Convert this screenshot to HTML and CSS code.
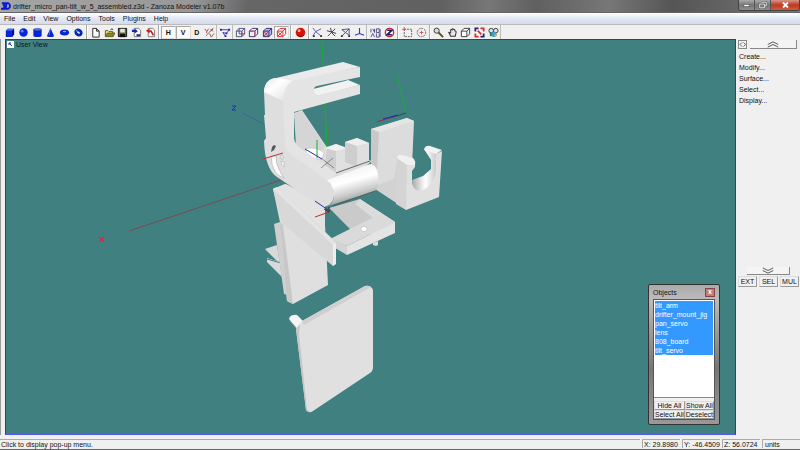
FILE: index.html
```html
<!DOCTYPE html>
<html lang="en">
<head>
    <meta charset="UTF-8">
    <meta name="viewport" content="width=device-width, initial-scale=1.0">
    <title>Zanoza Modeler</title>
    <link rel="stylesheet" href="styles.css">
</head>
<body>
    <!-- Title bar -->
    <header class="titlebar">
        <svg class="app-icon" viewBox="0 0 11 10"><path d="M1 2h3l-1 2.500 1 .5-1 3H0M6 2h2q2 1 2 3t-2 3H5z" fill="none" stroke="#0816d8" stroke-width="2"/></svg>
        <h1>drifter_micro_pan-tilt_w_5_assembled.z3d - Zanoza Modeler v1.07b</h1>
        <div class="window-buttons">
            <button type="button" aria-label="Minimize"><svg viewBox="0 0 16 10"><path d="M5 5.500h6" stroke="#555" stroke-width="3"/><path d="M5.500 5.500h5" stroke="#fff" stroke-width="1.500"/></svg></button>
            <button type="button" aria-label="Restore"><svg viewBox="0 0 16 10"><path d="M7 2h5v4h-2M5 4h5v4H5z" fill="none" stroke="#555" stroke-width="2"/><path d="M7 2h5v4h-2M5 4h5v4H5z" fill="none" stroke="#eee"/></svg></button>
            <button type="button" class="close" aria-label="Close"><svg viewBox="0 0 28 10"><path d="M12 2.500l5 5m0-5l-5 5" stroke="#fff" stroke-width="1.800"/></svg></button>
        </div>
    </header>

    <!-- Menu -->
    <nav class="menubar">
        <button type="button">File</button>
        <button type="button">Edit</button>
        <button type="button">View</button>
        <button type="button">Options</button>
        <button type="button">Tools</button>
        <button type="button">Plugins</button>
        <button type="button">Help</button>
    </nav>

    <!-- Toolbar -->
    <div class="toolbar">
        <div class="group six">
            <button type="button" aria-label="Box"><svg viewBox="0 0 12 12"><path d="M2 4l2-2h7v6l-2 3H2z" fill="#0626d6"/><path d="M2 4l2-2h7L9 4z" fill="#3d6cff"/><path d="M9 4l2-2v6l-2 3z" fill="#03107c"/></svg></button>
            <button type="button" aria-label="Sphere"><svg viewBox="0 0 12 12"><circle cx="6" cy="6" r="4.600" fill="#0626d6"/><circle cx="4.500" cy="4.500" r="1.500" fill="#5b8bff"/></svg></button>
            <button type="button" aria-label="Cylinder"><svg viewBox="0 0 12 12"><path d="M1.500 3v7q4.500 2 9 0V3z" fill="#0626d6"/><ellipse cx="6" cy="3" rx="4.500" ry="1.300" fill="#4d7cf5" stroke="#03107c" stroke-width=".5"/></svg></button>
            <button type="button" aria-label="Cone"><svg viewBox="0 0 12 12"><path d="M6 1L2 10q4 2 8 0z" fill="#0626d6"/><path d="M6 2L4.500 9" stroke="#4d7cf5"/></svg></button>
            <button type="button" aria-label="Disc"><svg viewBox="0 0 12 12"><ellipse cx="6" cy="6" rx="5" ry="3.200" fill="#0626d6"/><ellipse cx="6" cy="5" rx="2" ry=".8" fill="#8bb0ff"/></svg></button>
            <button type="button" aria-label="Torus"><svg viewBox="0 0 12 12"><ellipse cx="6" cy="6" rx="3.200" ry="2.600" transform="rotate(35 6 6)" fill="none" stroke="#0626b6" stroke-width="3"/><circle cx="4" cy="4" r="1" fill="#5b8bff"/></svg></button>
        </div>
        <div class="group five rule">
            <button type="button" aria-label="New"><svg viewBox="0 0 12 12"><path d="M3 1.500h4l3 3v6.500H3zM7 1.500v3h3" fill="#fff" stroke="#222"/></svg></button>
            <button type="button" aria-label="Open"><svg viewBox="0 0 12 12"><path d="M1.500 10V4h3l1 1h4v2" fill="#f5ee8a" stroke="#554f14"/><path d="M1.500 10.500l2-4H12l-2 4z" fill="#8c861d" stroke="#3d3b08" stroke-width=".7"/><path d="M7 3q2-2 3 0" fill="none" stroke="#222"/></svg></button>
            <button type="button" aria-label="Save"><svg viewBox="0 0 12 12"><path d="M1.500 1.500h9v9h-9z" fill="#686c20" stroke="#111"/><path d="M3.500 2h5v4h-5z" fill="#e4e4e4"/><path d="M3 7.500h6V11H3z" fill="#111"/></svg></button>
            <button type="button" aria-label="Import"><svg viewBox="0 0 12 12"><path d="M3.500 1.500h5l2 2v7h-7z" fill="#fff" stroke="#777"/><path d="M1 3h3V1.500l3.500 3-3.500 2.500V5.500H1zM6 8h4v2H6z" fill="#1327bd"/></svg></button>
            <button type="button" aria-label="Export"><svg viewBox="0 0 12 12"><path d="M3.500 1.500h5l2 2v7h-7z" fill="#fff" stroke="#777"/><path d="M1 4l4-2.500v2h2l3 5-1.500 1L6 5.500H5V7z" fill="#cf1d1d"/></svg></button>
        </div>
        <div class="group four rule">
            <button type="button" class="letter pressed">H</button>
            <button type="button" class="letter pressed">V</button>
            <button type="button" class="letter">D</button>
            <button type="button" aria-label="Vertex axes"><svg viewBox="0 0 12 12"><path d="M1 2l2 3 2-3M3 5v2M7 2l3 3m0-3L7 5M6 7l2 4m3-4l-3 4" fill="none" stroke="#c23b3b"/><path d="M2 10l8-9" stroke="#777"/></svg></button>
        </div>
        <div class="group one thin">
            <button type="button" aria-label="Polyline"><svg viewBox="0 0 12 12"><path d="M1 3h9L7 7 3 6l3 4" fill="none" stroke="#3434b5"/><path d="M0 2h2v2H0zM9 2h2v2H9zM6 6h2v2H6zM5 9h2v2H5z" fill="#222b80"/></svg></button>
        </div>
        <div class="group four thin">
            <button type="button" aria-label="Wireframe"><svg viewBox="0 0 12 12"><path d="M1.500 4.500h6v6h-6zM1.500 4.500l3-3h6v6l-3 3M7.500 4.500l3-3M4.500 1.500v6h6" fill="none" stroke="#3b3b75" stroke-width=".9"/><path d="M7.500 5v5" stroke="#d03b3b"/></svg></button>
            <button type="button" aria-label="Edges"><svg viewBox="0 0 12 12"><path d="M1.500 4.500h6v6h-6zM1.500 4.500l3-3h6v6l-3 3M7.500 4.500l3-3" fill="none" stroke="#30307b"/><path d="M7.500 5v5M2 4.500h5" stroke="#d04f5c"/></svg></button>
            <button type="button" aria-label="Faces"><svg viewBox="0 0 12 12"><path d="M1.500 4.500h6v6h-6zM1.500 4.500l3-3h6v6l-3 3M7.500 4.500l3-3" fill="#b9bbea" stroke="#26266e"/><path d="M2 5l5 5m0-5l-5 5" stroke="#d33"/></svg></button>
            <button type="button" class="pressed" aria-label="Object"><svg viewBox="0 0 12 12"><path d="M1.500 4.500h6v6h-6zM1.500 4.500l3-3h6v6l-3 3M7.500 4.500l3-3M2 5l5 5m0-5l-5 5" fill="#fff" stroke="#e02020"/></svg></button>
        </div>
        <div class="group one rule">
            <button type="button" aria-label="Materials"><svg viewBox="0 0 12 12"><circle cx="6" cy="6" r="5.200" fill="#d41408"/><path d="M2 9q4 3 8 0" stroke="#7a0500" fill="none"/><circle cx="4.500" cy="4" r="1.600" fill="#ffb19e"/></svg></button>
        </div>
        <div class="group four rule">
            <button type="button" aria-label="Vertices"><svg viewBox="0 0 12 12"><path d="M1 1l3 4 6-3M4 5l6 5M1 10l3-5" fill="none" stroke="#5151bb"/><path d="M1 9h2v2H1zM9 9h2v2H9z" fill="#333"/></svg></button>
            <button type="button" aria-label="Star"><svg viewBox="0 0 12 12"><path d="M1 4l10 3M5 1l1 5M6 6l4 4M6 6l4-4" stroke="#333" fill="none"/><path d="M6 6l-4 4" stroke="#4444c4"/></svg></button>
            <button type="button" aria-label="Polygons"><svg viewBox="0 0 12 12"><path d="M2 3l8-1v7L6 6l-4 4M2 3l4 3 4-4" fill="none" stroke="#484884"/><path d="M1 9h2v2H1zM9 9h2v2H9z" fill="#333"/></svg></button>
            <button type="button" aria-label="Local axes"><svg viewBox="0 0 12 12"><path d="M6 1v6l-5 2M6 7l5 2" fill="none" stroke="#3838ba" stroke-width="1.200"/></svg></button>
        </div>
        <div class="group two thin">
            <button type="button" aria-label="Numeric"><svg viewBox="0 0 12 12"><path d="M1 2v4m2-4l2 4V2M7 2v4h3V2H7M1 11l2-4 2 4M7 7v4h3V7M11 2v9" fill="none" stroke="#484884"/></svg></button>
            <button type="button" aria-label="Z lock"><svg viewBox="0 0 12 12"><circle cx="6" cy="6" r="4.500" fill="#fff" stroke="#c32626" stroke-width="1.500"/><path d="M3.500 3.500h5l-5 5h5" fill="none" stroke="#1b1b68" stroke-width="1.800"/></svg></button>
        </div>
        <div class="group two rule">
            <button type="button" aria-label="Select rectangle"><svg viewBox="0 0 12 12"><path d="M2.500 2.500h8v8h-8z" fill="none" stroke="#555" stroke-dasharray="2 1"/><path d="M0 2.500h4M2.500 0v4" stroke="#c55"/></svg></button>
            <button type="button" aria-label="Select circle"><svg viewBox="0 0 12 12"><circle cx="6" cy="6" r="4.600" fill="none" stroke="#555" stroke-dasharray="2 1"/><path d="M4 6h4M6 4v4" stroke="#c55"/></svg></button>
        </div>
        <div class="group five rule last">
            <button type="button" aria-label="Zoom"><svg viewBox="0 0 12 12"><circle cx="4" cy="4" r="2.800" fill="#d5dfe2" stroke="#333"/><path d="M6 6l5 5" stroke="#534f0d" stroke-width="2"/></svg></button>
            <button type="button" aria-label="Pan"><svg viewBox="0 0 12 12"><path d="M4 10L2 6l2 .5V3q1-1 1.500 0Q6 1 7 2.500 8.500 2 8.500 4q1.500 0 1.500 1.500L9 10z" fill="#e8e8e8" stroke="#333" stroke-width="1.100"/></svg></button>
            <button type="button" aria-label="Rotate"><svg viewBox="0 0 12 12"><path d="M1.500 4.500h6v6h-6zM1.500 4.500l3-3h6v6l-3 3M7.500 4.500l3-3" fill="#fff" stroke="#333"/></svg></button>
            <button type="button" aria-label="Zoom extents"><svg viewBox="0 0 12 12"><path d="M2 2h8v8H2z" fill="#fff"/><path d="M1.500 5V1.500H5M7 10.500h3.500V7" fill="none" stroke="#22247c" stroke-width="2"/><path d="M7 1.500h3.500V5M5 10.500H1.500V7M4 4l4 4" fill="none" stroke="#d23030" stroke-width="2"/></svg></button>
            <button type="button" aria-label="Render"><svg viewBox="0 0 12 12"><path d="M2 5h6v5H2z" fill="#22854b"/><circle cx="3.500" cy="4" r="2.500" fill="#d9e6ef" stroke="#333"/><circle cx="8.500" cy="4" r="2.500" fill="#d9e6ef" stroke="#333"/><circle cx="6.500" cy="8" r="2.800" fill="#3f9fd5"/><path d="M7 8h3v2H7z" fill="#d9b62a"/></svg></button>
        </div>
    </div>

    <main class="workspace">
        <!-- 3D view -->
        <section class="view">
            <svg class="scene" viewBox="6 40 729 394" aria-label="3D model">
                <defs>
                    <linearGradient id="roll" x1="0" y1="0" x2=".35" y2="1">
                        <stop offset="0" stop-color="#ddd"/><stop offset=".25" stop-color="#f4f4f4"/>
                        <stop offset=".5" stop-color="#fff"/><stop offset=".78" stop-color="#c8c8c8"/><stop offset="1" stop-color="#858585"/>
                    </linearGradient>
                    <linearGradient id="corner" x1="0" y1="0" x2="1" y2="1">
                        <stop offset="0" stop-color="#e2e2e2"/><stop offset=".35" stop-color="#fff"/><stop offset="1" stop-color="#dcdcdc"/>
                    </linearGradient>
                    <linearGradient id="hook" x1="0" y1="0" x2="1" y2="0">
                        <stop offset="0" stop-color="#aaa"/><stop offset=".5" stop-color="#fff"/><stop offset="1" stop-color="#bbb"/>
                    </linearGradient>
                </defs>

                <!-- world axes -->
                <path d="M129 231L284 179" stroke="#8c3c44" stroke-width=".8"/>
                <path d="M242 113L266 125" stroke="#3a609c" stroke-width=".7"/>
                <path d="M322 40L327 150" stroke="#1da83c"/>
                <path d="M99 237l5 5m0-5l-5 5" stroke="#c02b3c"/>
                <path d="M232 106h4l-4 4h4" stroke="#1830cf" fill="none"/>

                <!-- bracket under the arm -->
                <path d="M265 249l12-4 5 32-15-15 0-4 10 3z" fill="#d9d9d9"/>
                <path d="M267 259l14 4" stroke="#408080"/>
                <path d="M274 224l6-2 8 73-4-1z" fill="#cfcfcf"/>
                <path d="M280 222l-7-33 13-5 38 19 4 82-35 19-6-3z" fill="#dfdfdf"/>
                <path d="M280 222l3 3 10 79-6-3z" fill="#c8c8c8"/>
                <path d="M329 208l31-9 35 23-22 12-23-4z" fill="#cacaca"/>
                <path d="M324 209l6 0 20 20-14 6-12-10z" fill="#408080"/>
                <path d="M360 199l35 23-10 5-30-23z" fill="#dcdcdc"/>
                <path d="M330 239l20-10 30-15 15 8-48 24z" fill="#dadada"/>
                <path d="M330 238l17 8v9l-17-10z" fill="#d4d4d4"/>
                <path d="M347 246l48-24v11l-48 22z" fill="#e4e4e4"/>
                <path d="M373 243l5-2v4l-2 1-3-1z" fill="#ddd"/>
                <path d="M273 189l12-5 40 21v30z" fill="#e2e2e2"/>
                <path d="M273 189l4-2 59 55v21l-3 3-51-43z" fill="#d8d8d8"/>
                <path d="M273 189l4-2 59 56-3 2z" fill="#e4e4e4"/>
                <path d="M333 245l3-2v21l-3 2z" fill="#eee"/>
                <ellipse cx="364" cy="229" rx="3.200" ry="2.500" fill="#fff" stroke="#aaa" stroke-width=".5"/>

                <!-- servo plate and hook -->
                <path d="M371 129l36-11 7 3-3 68-14 6-26-11z" fill="#dcdcdc"/>
                <path d="M371 129l36-11 7 3-35 11z" fill="#e5e5e5"/>
                <path d="M371 129l8 3-3 56-5-3z" fill="#c8c8c8"/>
                <path d="M372 187l22-8 3-17 10 1v47z" fill="#d2d2d2"/>
                <path d="M397 158l10 6-1 46-10-6z" fill="#d4d4d4"/>
                <path d="M424 149l7 11v9l-8 7-11 4q0 12 8 13l14-5 5-34-5-5z" fill="url(#hook)"/>
                <path d="M407 163l8-1v5l-3 4v12q2 8 8 8 14-4 16-21v-8q-3-8 6-11l-3 46-33 13z" fill="#e0e0e0"/>
                <path d="M397 158q1-4 5-3l11 3q3 3 2 7l-8 0z" fill="#f0f0f0"/>
                <path d="M424 150q1-5 6-4l12 4-6 4z" fill="#f2f2f2"/>

                <!-- far lug and blocks -->
                <path d="M294 113l8-3 24 36 46 15-10 8-32 14-30-25z" fill="#dedede"/>
                <path d="M294 113l8-2 23 36-12 10-17-10z" fill="#d5d5d5"/>
                <path d="M305 149q12-3 19 4l-2 6q-14 1-17-10z" fill="#fff" stroke="#bbb" stroke-width=".6"/>
                <path d="M327 147l9-3 11 4v20l-11 5-11-7z" fill="#cfcfcf"/>
                <path d="M336 151l11-3v20l-11 5z" fill="#e0e0e0"/>
                <path d="M325 148l11-4 11 4-11 3z" fill="#f1f1f1"/>
                <path d="M345 142l12-4 12 5v19l-12 5-12-5z" fill="#cecece"/>
                <path d="M357 146l12-3v19l-12 5z" fill="#dfdfdf"/>
                <path d="M345 142l12-4 12 5-12 3z" fill="#eee"/>
                <path d="M336 173l34-12" stroke="#666"/>

                <!-- tilt arm -->
                <path d="M345 81l3-1 12 5-45 12-2-8z" fill="#f2f2f2"/>
                <path d="M283 81l77-14v10l-43 9q-4 1-3 5 1 4 4 4l42-10v9l-66 18v26q0 6 9 12l33 23-8 12-45-31q-6-5-7-13l-2-39q0-12 5-21z" fill="#e4e4e4"/>
                <path d="M272 79l71-17 17 5-74 15-22 9q1-9 8-12z" fill="#ebebeb"/>
                <path d="M264 92q1-15 15-14l8 4q-4 8-4 20l2 40q0 10 8 14l35 25q7 6 6 15-2 11-12 11l-45-30q-12-8-13-36l2-3-2-23 1 0z" fill="#dedede"/>
                <path d="M264 92q1-15 15-14l14 3q-9 4-10 20z" fill="url(#corner)"/>
                <path d="M272 147l2-2 2 1-2 4-3 2z" fill="#555"/>
                <path d="M271 156q1 19 13 22-3-4-5-9-3-5-3-13z" fill="#fff" stroke="#999" stroke-width=".5"/>
                <path d="M281 155l2 1v3h-2zM281 161l3 1v5q-3-1-3-6z" fill="#fff" stroke="#999" stroke-width=".5"/>
                <path d="M327 180l43-16q7 1 8 10 2 12-3 17l-50 16q9-2 9-13-1-9-7-14z" fill="url(#roll)"/>
                <path d="M333 206l42-15" stroke="#555" stroke-width=".8"/>

                <!-- lens plate -->
                <path d="M289 319q1-4 5-4 3-1 5 2l7 7-7 7z" fill="#f5f5f5"/>
                <path d="M290 321l6 7" fill="none" stroke="#999"/>
                <path d="M302 321l63-35q6-1 8 4v77q0 4-3 6l-57 38q-4 3-7-1l-10-81z" fill="#e0e0e0"/>
                <path d="M302 321l63-35q4-1 6 1l-67 38z" fill="#cfcfcf"/>
                <path d="M296 329l4-5-1 10 8 75q1 2 4 3-4 0-5-2z" fill="#c6c6c6"/>

                <!-- local axes -->
                <path d="M397 74l9 39" stroke="#1da83c"/>
                <path d="M406 113l-16 5" stroke="#24505c"/>
                <path d="M377 122l18-6" stroke="#b52424"/>
                <path d="M383 119l15-4" stroke="#2525c4"/>
                <path d="M317 140v18M325 104l2 43" stroke="#1dac34"/>
                <path d="M305 149l17 10" stroke="#2a2aac"/>
                <path d="M321 158l13 10m-1-10l-12 10" stroke="#555" stroke-width=".6"/>
                <path d="M263 159l20-6M315 217l14-5" stroke="#c03030"/>
                <path d="M315 201l13 9" stroke="#3030b5"/>
                <path d="M324 209l5 3v-5" stroke="#333" fill="none"/>
            </svg>
            <div class="view-title">
                <svg viewBox="0 0 7 7"><path d="M0 0h7v7H0z" fill="#fff"/><path d="M2 2l3 3M2 4V2h2" stroke="#2a2aa8" fill="none"/></svg>
                <span>User View</span>
            </div>

            <!-- Objects window -->
            <div class="objects">
                <div class="objects-title">
                    <h2>Objects</h2>
                    <button type="button" aria-label="Close objects">x</button>
                </div>
                <div class="objects-body">
                    <ul>
                        <li>tilt_arm</li>
                        <li>drifter_mount_jig</li>
                        <li>pan_servo</li>
                        <li>lens</li>
                        <li>808_board</li>
                        <li>tilt_servo</li>
                    </ul>
                    <div class="objects-buttons">
                        <button type="button">Hide All</button>
                        <button type="button">Show All</button>
                        <button type="button">Select All</button>
                        <button type="button">Deselect</button>
                    </div>
                </div>
            </div>
        </section>

        <!-- Command panel -->
        <aside class="panel">
            <div class="panel-top">
                <button type="button" class="swap" aria-label="Swap side"><svg viewBox="0 0 7 7"><path d="M3 1.500l-2 2 2 2M4.500 1.500l2 2-2 2" fill="none" stroke="#444" stroke-width=".8"/></svg></button>
                <button type="button" class="scroll" aria-label="Scroll up"><svg viewBox="0 0 14 8"><path d="M1 4l6-3 6 3M1 7l6-3 6 3" fill="none" stroke="#444"/></svg></button>
            </div>
            <div class="commands">
                <button type="button">Create...</button>
                <button type="button">Modify...</button>
                <button type="button">Surface...</button>
                <button type="button">Select...</button>
                <button type="button">Display...</button>
            </div>
            <button type="button" class="scroll down" aria-label="Scroll down"><svg viewBox="0 0 14 8"><path d="M1 1l6 3 6-3M1 4l6 3 6-3" fill="none" stroke="#444"/></svg></button>
            <div class="modes">
                <button type="button">EXT</button>
                <button type="button">SEL</button>
                <button type="button">MUL</button>
            </div>
        </aside>
    </main>

    <!-- Status bar -->
    <footer class="statusbar">
        <span class="hint">Click to display pop-up menu.</span>
        <span class="cell">X: 29.8980</span>
        <span class="cell">Y: -46.4509</span>
        <span class="cell">Z: 56.0724</span>
        <span class="cell units">units</span>
    </footer>
</body>
</html>
```
FILE: styles.css
```css
* {
    box-sizing: border-box;
}
body {
    margin: 0;
    height: 100vh;
    display: flex;
    flex-direction: column;
    overflow: hidden;
    background: #f0f0f0;
    color: #111;
    font: 7px/9px "Liberation Sans", Arial, sans-serif;
}
button {
    margin: 0;
    padding: 0;
    border: 0;
    background: none;
    color: inherit;
    font: inherit;
}
h1, h2 {
    margin: 0;
    font: inherit;
}
svg {
    display: block;
}

/* title bar */
.titlebar {
    display: flex;
    align-items: center;
    height: 13px;
    padding-left: 1px;
    background: linear-gradient(100deg, #a5a5a5 0%, #989898 24%, #666 31%, #616161 55%, #777 61%, #606060 67%, #777 76%, #555 84%, #777 100%);
    border-bottom: 1px solid #666;
    color: #111;
}
.app-icon {
    width: 10px;
    height: 10px;
    margin-right: 2px;
}
.titlebar h1 {
    flex: 1;
    white-space: nowrap;
}
.window-buttons {
    display: flex;
    align-self: flex-start;
    border: 1px solid #444;
    border-top: 0;
    border-radius: 0 0 3px 3px;
    overflow: hidden;
}
.window-buttons button {
    width: 16px;
    height: 10px;
    background: linear-gradient(#aaa, #777 50%, #8d8d8d);
    border-right: 1px solid #555;
}
.window-buttons svg {
    width: 100%;
    height: 100%;
}
.window-buttons .close {
    width: 28px;
    border-right: 0;
    background: linear-gradient(#d99585, #b93a24 50%, #d65b3b);
}

/* menu */
.menubar {
    display: flex;
    height: 12px;
    background: linear-gradient(#fff, #e4e9f5 45%, #d4dbed);
    border-bottom: 1px solid #bbb;
}
.menubar button {
    padding: 0 4px;
}

/* toolbar */
.toolbar {
    display: flex;
    height: 14px;
    padding-left: 3px;
}
.group {
    display: flex;
    align-items: center;
    box-sizing: content-box;
}
.group button {
    flex: 1;
    height: 13px;
    display: flex;
    align-items: center;
    justify-content: center;
}
.group svg {
    width: 11px;
    height: 11px;
}
.group .pressed {
    background: #fafafa;
    border: 1px solid #ddd;
    border-top-color: #aaa;
    border-left-color: #aaa;
}
.group .letter {
    font-weight: bold;
}
.six { width: 82px; }
.five { width: 68px; }
.four { width: 55px; }
.two { width: 28px; }
.one { width: 14px; }
.rule {
    margin-left: 1px;
    padding-left: 1px;
    border-left: 2px groove #fff;
}
.thin {
    padding-left: 1px;
    border-left: 1px solid #bbb;
}
.last {
    border-right: 1px solid #bbb;
}

/* workspace */
.workspace {
    flex: 1;
    display: flex;
    min-height: 0;
    padding-left: 4px;
    border-left: 1px solid #999;
}
.view {
    position: relative;
    flex: 1;
    background: #408080;
    border: 1px solid #2b36b5;
    border-bottom-color: #5058ee;
}
.scene {
    position: absolute;
    width: 100%;
    height: 100%;
}
.view-title {
    position: absolute;
    top: 0;
    left: 0;
    display: flex;
    align-items: center;
    gap: 2px;
    padding-left: 1px;
    color: #0b1818;
}
.view-title svg {
    width: 7px;
    height: 7px;
}

/* objects window */
.objects {
    position: absolute;
    right: 15px;
    bottom: 9px;
    width: 72px;
    padding: 0 4px 4px;
    background: linear-gradient(#aaa, #bcbcbc 10%, #777 60%, #999);
    border: 1px solid #333;
    border-radius: 2px;
}
.objects-title {
    display: flex;
    align-items: center;
    justify-content: space-between;
    height: 14px;
}
.objects-title button {
    width: 10px;
    height: 9px;
    border: 1px solid #844;
    background: #c08078;
    color: #fff;
    font-weight: bold;
    line-height: 6px;
}
.objects-body {
    background: #f0f0f0;
    border: 1px solid #555;
}
.objects ul {
    height: 98px;
    margin: 0;
    padding: 1px;
    list-style: none;
    background: #fff;
    border-bottom: 1px solid #888;
}
.objects li {
    background: #3399ff;
    color: #fff;
    white-space: nowrap;
}
.objects-buttons {
    display: grid;
    grid-template-columns: 1fr 1fr;
    padding-top: 3px;
}
.objects-buttons button {
    border: 1px solid #999;
    border-top-color: #ddd;
    border-left-color: #ddd;
    line-height: 7px;
    white-space: nowrap;
}

/* command panel */
.panel {
    display: flex;
    flex-direction: column;
    width: 64px;
    padding: 1px 1px 0 2px;
}
.panel-top {
    display: flex;
    gap: 3px;
    padding-right: 2px;
}
.swap {
    width: 9px;
    height: 9px;
    border: 1px solid #888;
}
.scroll {
    flex: 1;
    height: 9px;
    border-right: 1px solid #888;
    border-bottom: 1px solid #888;
    background: #f4f4f4;
}
.scroll svg {
    width: 14px;
    height: 7px;
    margin: 0 auto;
}
.commands {
    flex: 1;
    display: flex;
    flex-direction: column;
    align-items: flex-start;
    padding: 2px 0 0 1px;
}
.commands button {
    line-height: 11px;
}
.down {
    flex: none;
    height: 8px;
    margin: 0 9px 1px;
}
.modes {
    display: flex;
    gap: 2px;
    margin-bottom: 148px;
}
.modes button {
    flex: 1;
    border: 1px solid #999;
    border-top-color: #ddd;
    border-left-color: #ddd;
}

/* status bar */
.statusbar {
    display: flex;
    height: 15px;
    padding: 4px 0 1px;
    border-bottom: 1px solid #666;
    white-space: nowrap;
}
.statusbar span {
    border-top: 1px solid #aaa;
    padding-left: 1px;
}
.statusbar .hint {
    flex: 1;
}
.statusbar .cell {
    width: 38px;
    margin-left: 2px;
    border-left: 1px solid #aaa;
}
.statusbar .units {
    padding-left: 2px;
}
```
